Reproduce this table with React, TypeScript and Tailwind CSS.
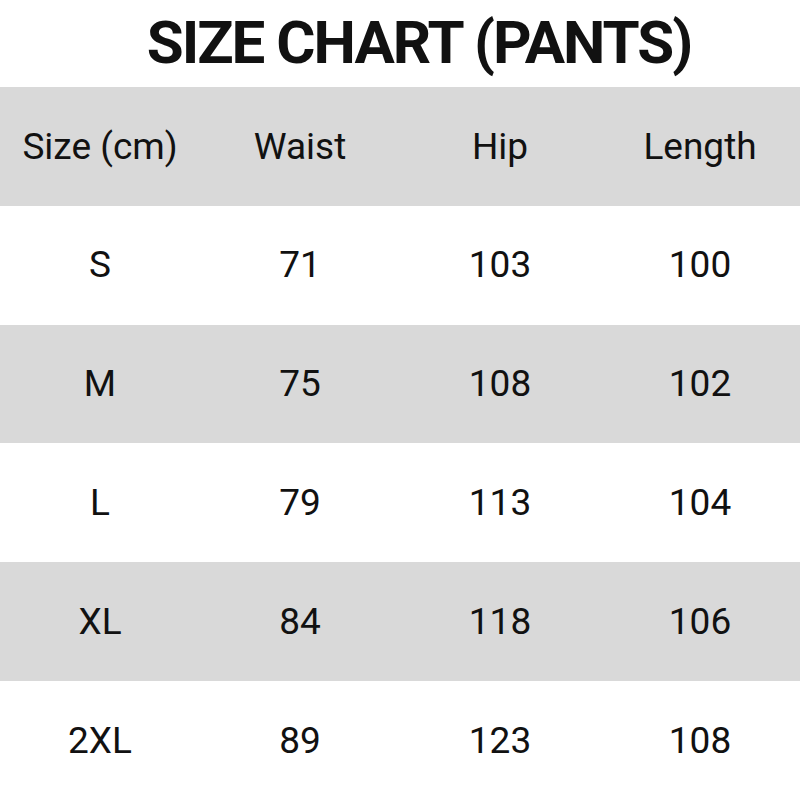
export default function App() {
  const header = ["Size (cm)", "Waist", "Hip", "Length"];
  const rows = [
    ["S", "71", "103", "100"],
    ["M", "75", "108", "102"],
    ["L", "79", "113", "104"],
    ["XL", "84", "118", "106"],
    ["2XL", "89", "123", "108"],
  ];

  return (
    <div className="w-[800px] h-[800px] bg-white flex flex-col font-['Roboto',sans-serif] text-[#111]">
      {/* Title */}
      <div className="h-[87px] flex items-center justify-center pl-[38px]">
        <h1 className="text-[60px] font-bold leading-none tracking-[-2px] mt-[-1px]">SIZE CHART (PANTS)</h1>
      </div>

      {/* Table */}
      <div className="flex-1 flex flex-col">
        {[header, ...rows].map((row, i) => (
          <div
            key={i}
            className={`flex-1 grid grid-cols-4 items-center text-[37px] ${i % 2 === 0 ? "bg-[#d9d9d9]" : "bg-white"}`}
          >
            {row.map((cell, j) => (
              <div key={j} className="text-center">
                {cell}
              </div>
            ))}
          </div>
        ))}
      </div>
    </div>
  );
}
